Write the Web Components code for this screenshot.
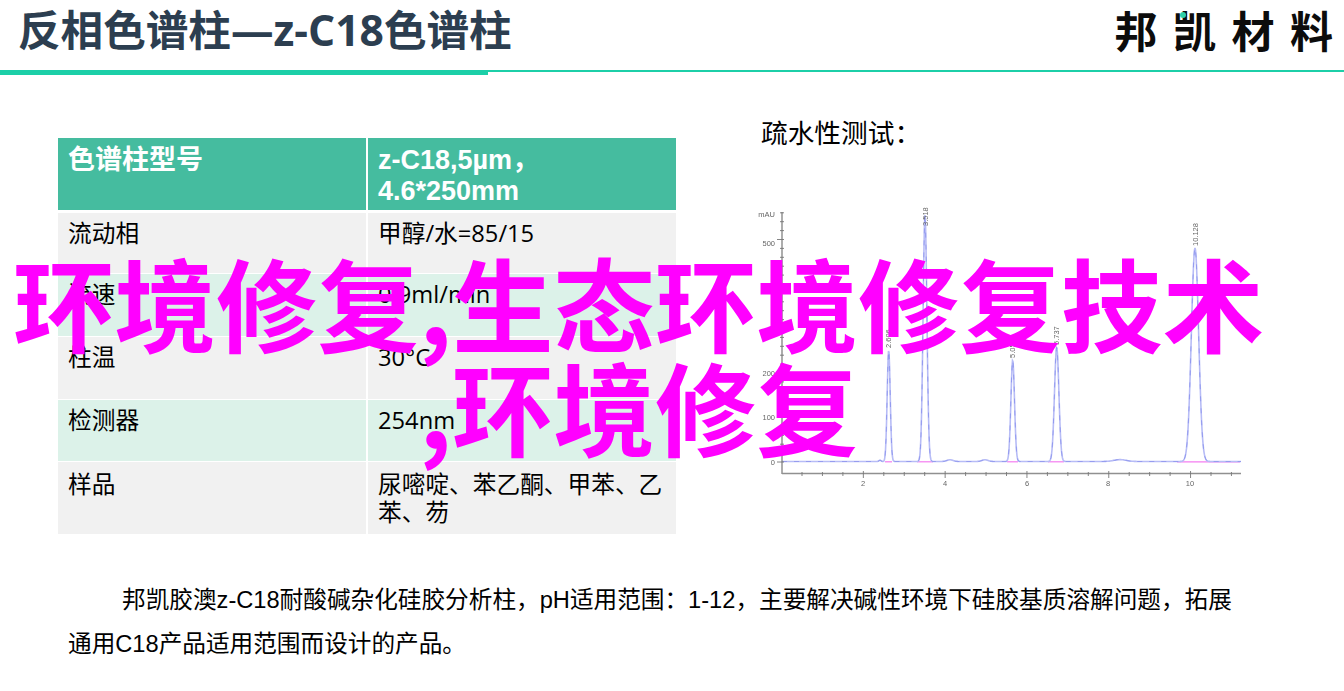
<!DOCTYPE html>
<html lang="zh-CN">
<head>
<meta charset="utf-8">
<title>反相色谱柱</title>
<style>
html,body{margin:0;padding:0;background:#fff}
body{width:1344px;height:691px;overflow:hidden;position:relative;font-family:"Noto Sans CJK SC",sans-serif;color:#000}
</style>
</head>
<body>
<slide-page>
  <slide-header slot="header">
    <span slot="title">反相色谱柱—z-C18色谱柱</span>
    <brand-logo slot="logo"></brand-logo>
  </slide-header>
  <spec-table slot="table">
    <spec-row head><span slot="a">色谱柱型号</span><span slot="b">z-C18,5µm，4.6*250mm</span></spec-row>
    <spec-row h="61"><span slot="a">流动相</span><span slot="b">甲醇/水=85/15</span></spec-row>
    <spec-row h="63" alt><span slot="a">流速</span><span slot="b">0.9ml/min</span></spec-row>
    <spec-row h="63"><span slot="a">柱温</span><span slot="b">30°C</span></spec-row>
    <spec-row h="62" alt><span slot="a">检测器</span><span slot="b">254nm</span></spec-row>
    <spec-row h="72" pad="8"><span slot="a">样品</span><span slot="b">尿嘧啶、苯乙酮、甲苯、乙苯、芴</span></spec-row>
  </spec-table>
  <chart-panel slot="chart">疏水性测试：</chart-panel>
  <intro-text slot="text">邦凯胶澳z-C18耐酸碱杂化硅胶分析柱，pH适用范围：1-12，主要解决碱性环境下硅胶基质溶解问题，拓展通用C18产品适用范围而设计的产品。</intro-text>
</slide-page>
<banner-overlay><span>环境修复,生态环境修复技术</span><span>,环境修复</span></banner-overlay>
<script>
function def(name, html, extra){
  const t=document.createElement('template');t.innerHTML=html;
  customElements.define(name,class extends HTMLElement{
    constructor(){super();this.attachShadow({mode:'open'}).appendChild(t.content.cloneNode(true));}
    connectedCallback(){if(extra)extra(this);}
  });
}
def('slide-page',`<style>
:host{display:flex;flex-direction:column;width:1344px;height:691px}
.main{display:flex;padding:40px 0 0 58px}
.tb{margin-top:23px;flex:none}
.ch{margin-left:66px;flex:none}
.tx{margin-top:45px;padding-left:68px}
</style>
<slot name="header"></slot>
<div class="main"><div class="tb"><slot name="table"></slot></div><div class="ch"><slot name="chart"></slot></div></div>
<div class="tx"><slot name="text"></slot></div>`);

def('slide-header',`<style>
:host{display:block;flex:none;height:75px;position:relative}
.bar{display:flex;justify-content:space-between;align-items:center;height:70px;box-sizing:border-box;padding:0 11px 12px 18px}
.title{font:700 42.6px/58px "Open Sans","Noto Sans CJK SC",sans-serif;color:#2c3e50;white-space:nowrap}
.rule{height:2px;background:#1ccfa8}
.thick{position:absolute;left:0;top:70px;width:488px;height:5px;background:#1ccfa8}
</style>
<div class="bar"><div class="title"><slot name="title"></slot></div><slot name="logo"></slot></div>
<div class="rule"></div><div class="thick"></div>`);

def('brand-logo',`<style>
:host{display:block;position:relative;font:700 43px/58px "Noto Sans CJK SC",sans-serif;color:#0c0c0c;letter-spacing:15.5px;white-space:nowrap;margin-right:-15.5px}
.dot{position:absolute;left:65px;top:12px;width:6px;height:6px;border-radius:50%;background:#2ecfa8}
</style>邦凯材料<span class="dot"></span>`);

def('spec-table',`<style>
:host{display:flex;flex-direction:column;width:618px;height:395px}
</style><slot></slot>`);

def('spec-row',`<style>
:host{display:grid;grid-template-columns:308px 308px;column-gap:2px;box-sizing:border-box;flex:none;font:400 23.7px/28px "Open Sans","Noto Sans CJK SC",sans-serif;color:#000;border-bottom:1px solid #fff}
:host([head]){font:700 27px/31px "Liberation Sans","Noto Sans CJK SC",sans-serif;color:#fff;border-bottom:0;margin-bottom:3px}
:host(:last-child){border-bottom:0}
.c{background:var(--bg,#f1f1f1);padding:var(--pad,6px) 10px 0;box-sizing:border-box}
:host([head]) .c{background:#45bc9f;padding-top:7px}
:host([alt]) .c{background:#dcf2e9}
</style>
<div class="c"><slot name="a"></slot></div><div class="c"><slot name="b"></slot></div>`,
el=>{
  const h=el.getAttribute('h');
  el.style.height=(el.hasAttribute('head')?72:+h)+'px';
  if(el.getAttribute('pad'))el.style.setProperty('--pad',el.getAttribute('pad')+'px');
});

const NS='http://www.w3.org/2000/svg';
function buildChart(root){
  const svg=root.querySelector('svg'),g=svg.querySelector('#plot');
  const add=(n,a,txt)=>{const e=document.createElementNS(NS,n);for(const k in a)e.setAttribute(k,a[k]);if(txt)e.textContent=txt;g.appendChild(e);return e;};
  const base=461.5;
  const peaks=[[888.7,350,1.5],[925,215,1.9],[1012.7,360,1.8],[1056.7,347,2.2],[1195,248,3.6],[950,459.8,3],[985,459.8,3],[1120,459.6,6],[880,460.2,1]];
  let d='';
  for(let x=782;x<=1241;x+=.5){let y=base;for(const[p,t,s]of peaks){y-=(base-t)*Math.exp(-((x-p)**2)/(2*s*s));}d+=(d?'L':'M')+x.toFixed(1)+' '+y.toFixed(1);}
  [[885,892],[917,933],[1007,1018],[1048,1064],[1177,1240]].forEach(([a,b])=>add('line',{x1:a,x2:b,y1:base+.3,y2:base+.3,stroke:'#f47cf0','stroke-width':1.2}));
  add('path',{d,fill:'none',stroke:'#b7bcf6','stroke-width':1.6});
  add('path',{d,fill:'none',stroke:'#6a74e6','stroke-width':.7,'stroke-dasharray':'5 7',opacity:.7});
  add('line',{x1:782,x2:782,y1:212,y2:474,stroke:'#808080','stroke-width':1.3});
  add('line',{x1:782,x2:1241,y1:473.5,y2:473.5,stroke:'#909090','stroke-width':1.3});
  for(let i=0;i<=28;i++){const y=462-i*8.9;const M=i%5===0;add('line',{x1:M?777:780,x2:784,y1:y,y2:y,stroke:'#777','stroke-width':.9});}
  for(let i=0;i<=21;i++){const x=802+i*20.45;const M=(i+3)%4===2;add('line',{x1:x,x2:x,y1:M?471:472,y2:M?478:476,stroke:'#777','stroke-width':.9});}
  const lab=(x,y,t,anchor)=>add('text',{x,y,'font-size':7.5,'font-family':'Liberation Sans',fill:'#666','text-anchor':anchor||'end'},t);
  lab(775,217,'mAU');lab(775,246,'500');lab(775,290,'400');lab(775,334,'300');lab(775,376,'200');lab(775,420,'100');lab(775,465,'0');
  [[863,'2'],[945,'4'],[1027,'6'],[1108,'8'],[1190,'10']].forEach(([x,t])=>lab(x,486,t,'middle'));
  [[888.7,348,'2.606'],[925,226,'3.518'],[1012.7,358,'5.05'],[1056.7,345,'5.737'],[1195,246,'10.128']].forEach(([x,y,t])=>{
    add('text',{x:0,y:0,'font-size':7.5,'font-family':'Liberation Sans',fill:'#666',transform:`translate(${x+2.5} ${y}) rotate(-90)`},t);
  });
}
def('chart-panel',`<style>
:host{display:block;width:510px;font:400 26.7px/34px "Noto Sans CJK SC",sans-serif;color:#000}
.h{padding-left:19px;height:90px;box-sizing:border-box}
svg{display:block;width:510px;height:285px}
</style>
<div class="h"><slot></slot></div>
<svg viewBox="742 205 510 285" role="img" aria-label="色谱图"><defs><filter id="soft" x="-5%" y="-5%" width="110%" height="110%"><feGaussianBlur stdDeviation=".5"/></filter></defs><g id="plot" filter="url(#soft)"></g></svg>`,
el=>buildChart(el.shadowRoot));

def('intro-text',`<style>
:host{display:block;width:1176px;font:400 23.65px/44px "Liberation Sans","Noto Sans CJK SC",sans-serif;color:#000;text-indent:54px}
</style><slot></slot>`);

def('banner-overlay',`<style>
:host{position:absolute;left:0;top:249px;width:1277px;text-align:center;font:700 101.5px/104px "Noto Sans CJK SC",sans-serif;color:#f0f;white-space:nowrap;pointer-events:none}
::slotted(span){display:block}
</style><slot></slot>`);
</script>
</body>
</html>
